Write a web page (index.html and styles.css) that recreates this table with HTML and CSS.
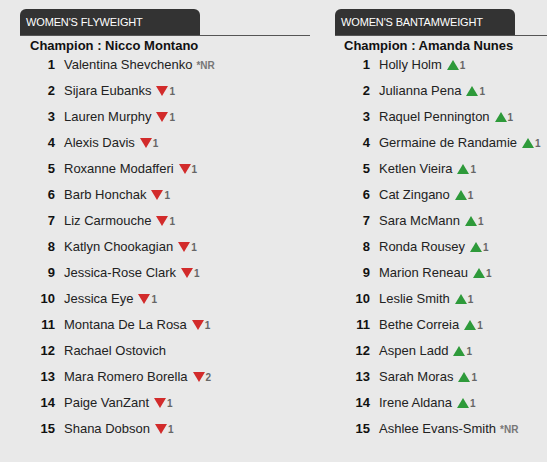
FILE: index.html
```html
<!DOCTYPE html>
<html>
<head>
<meta charset="utf-8">
<link rel="stylesheet" href="styles.css">
</head>
<body>
<div class="page">
  <section class="division">
    <div class="head"><div class="tab">WOMEN'S FLYWEIGHT</div></div>
    <div class="champ">Champion : Nicco Montano</div>
    <ol class="list">
      <li><span class="rank">1</span><span class="name">Valentina Shevchenko</span><span class="nr">*NR</span></li>
      <li><span class="rank">2</span><span class="name">Sijara Eubanks</span><span class="down"></span><span class="chg">1</span></li>
      <li><span class="rank">3</span><span class="name">Lauren Murphy</span><span class="down"></span><span class="chg">1</span></li>
      <li><span class="rank">4</span><span class="name">Alexis Davis</span><span class="down"></span><span class="chg">1</span></li>
      <li><span class="rank">5</span><span class="name">Roxanne Modafferi</span><span class="down"></span><span class="chg">1</span></li>
      <li><span class="rank">6</span><span class="name">Barb Honchak</span><span class="down"></span><span class="chg">1</span></li>
      <li><span class="rank">7</span><span class="name">Liz Carmouche</span><span class="down"></span><span class="chg">1</span></li>
      <li><span class="rank">8</span><span class="name">Katlyn Chookagian</span><span class="down"></span><span class="chg">1</span></li>
      <li><span class="rank">9</span><span class="name">Jessica-Rose Clark</span><span class="down"></span><span class="chg">1</span></li>
      <li><span class="rank">10</span><span class="name">Jessica Eye</span><span class="down"></span><span class="chg">1</span></li>
      <li><span class="rank">11</span><span class="name">Montana De La Rosa</span><span class="down"></span><span class="chg">1</span></li>
      <li><span class="rank">12</span><span class="name">Rachael Ostovich</span></li>
      <li><span class="rank">13</span><span class="name">Mara Romero Borella</span><span class="down"></span><span class="chg">2</span></li>
      <li><span class="rank">14</span><span class="name">Paige VanZant</span><span class="down"></span><span class="chg">1</span></li>
      <li><span class="rank">15</span><span class="name">Shana Dobson</span><span class="down"></span><span class="chg">1</span></li>
    </ol>
  </section>
  <section class="division">
    <div class="head"><div class="tab">WOMEN'S BANTAMWEIGHT</div></div>
    <div class="champ">Champion : Amanda Nunes</div>
    <ol class="list">
      <li><span class="rank">1</span><span class="name">Holly Holm</span><span class="up"></span><span class="chg">1</span></li>
      <li><span class="rank">2</span><span class="name">Julianna Pena</span><span class="up"></span><span class="chg">1</span></li>
      <li><span class="rank">3</span><span class="name">Raquel Pennington</span><span class="up"></span><span class="chg">1</span></li>
      <li><span class="rank">4</span><span class="name">Germaine de Randamie</span><span class="up"></span><span class="chg">1</span></li>
      <li><span class="rank">5</span><span class="name">Ketlen Vieira</span><span class="up"></span><span class="chg">1</span></li>
      <li><span class="rank">6</span><span class="name">Cat Zingano</span><span class="up"></span><span class="chg">1</span></li>
      <li><span class="rank">7</span><span class="name">Sara McMann</span><span class="up"></span><span class="chg">1</span></li>
      <li><span class="rank">8</span><span class="name">Ronda Rousey</span><span class="up"></span><span class="chg">1</span></li>
      <li><span class="rank">9</span><span class="name">Marion Reneau</span><span class="up"></span><span class="chg">1</span></li>
      <li><span class="rank">10</span><span class="name">Leslie Smith</span><span class="up"></span><span class="chg">1</span></li>
      <li><span class="rank">11</span><span class="name">Bethe Correia</span><span class="up"></span><span class="chg">1</span></li>
      <li><span class="rank">12</span><span class="name">Aspen Ladd</span><span class="up"></span><span class="chg">1</span></li>
      <li><span class="rank">13</span><span class="name">Sarah Moras</span><span class="up"></span><span class="chg">1</span></li>
      <li><span class="rank">14</span><span class="name">Irene Aldana</span><span class="up"></span><span class="chg">1</span></li>
      <li><span class="rank">15</span><span class="name">Ashlee Evans-Smith</span><span class="nr">*NR</span></li>
    </ol>
  </section>
</div>
</body>
</html>
```
FILE: styles.css
```css
html, body {
  margin: 0;
  padding: 0;
  background: #e9e9e9;
}
body {
  font-family: "Liberation Sans", Arial, sans-serif;
  color: #222;
}
.page {
  display: flex;
  gap: 25px;
  padding: 9px 0 0 20px;
  width: 547px;
  box-sizing: border-box;
}
.division {
  width: 290px;
  flex: none;
}
.division + .division {
  flex: 1;
  width: auto;
  min-width: 0;
}
.head {
  border-bottom: 1px solid #555;
  height: 26px;
}
.tab {
  width: 180px;
  height: 26px;
  background: #333;
  border-radius: 6px 6px 0 0;
  color: #fff;
  font-size: 11px;
  line-height: 26px;
  padding-left: 6px;
  box-sizing: border-box;
  letter-spacing: -0.15px;
  white-space: nowrap;
}
.champ {
  font-weight: bold;
  font-size: 13px;
  line-height: 19px;
  padding-left: 10px;
  color: #111;
  white-space: nowrap;
}
.division + .division .champ {
  padding-left: 9px;
}
.list {
  list-style: none;
  margin: 0;
  padding: 1px 0 0;
  display: flex;
  flex-direction: column;
  gap: 8px;
}
.list li {
  display: flex;
  align-items: baseline;
  font-size: 13px;
  line-height: 18px;
  height: 18px;
  white-space: nowrap;
}
.rank {
  width: 35px;
  flex: none;
  text-align: right;
  font-weight: bold;
  color: #111;
  margin-right: 9px;
}
.name {
  color: #222;
}
.nr {
  font-size: 10px;
  line-height: 12px;
  font-weight: bold;
  color: #777;
  margin-left: 4px;
}
.down, .up {
  display: inline-block;
  width: 0;
  height: 0;
  margin-left: 5px;
  border-left: 6px solid transparent;
  border-right: 6px solid transparent;
  align-self: center;
}
.down {
  border-top: 10px solid #d22b2b;
}
.up {
  border-bottom: 10px solid #2e9a3a;
}
.chg {
  font-size: 10px;
  line-height: 12px;
  font-weight: bold;
  color: #666;
  margin-left: 1px;
}
```
